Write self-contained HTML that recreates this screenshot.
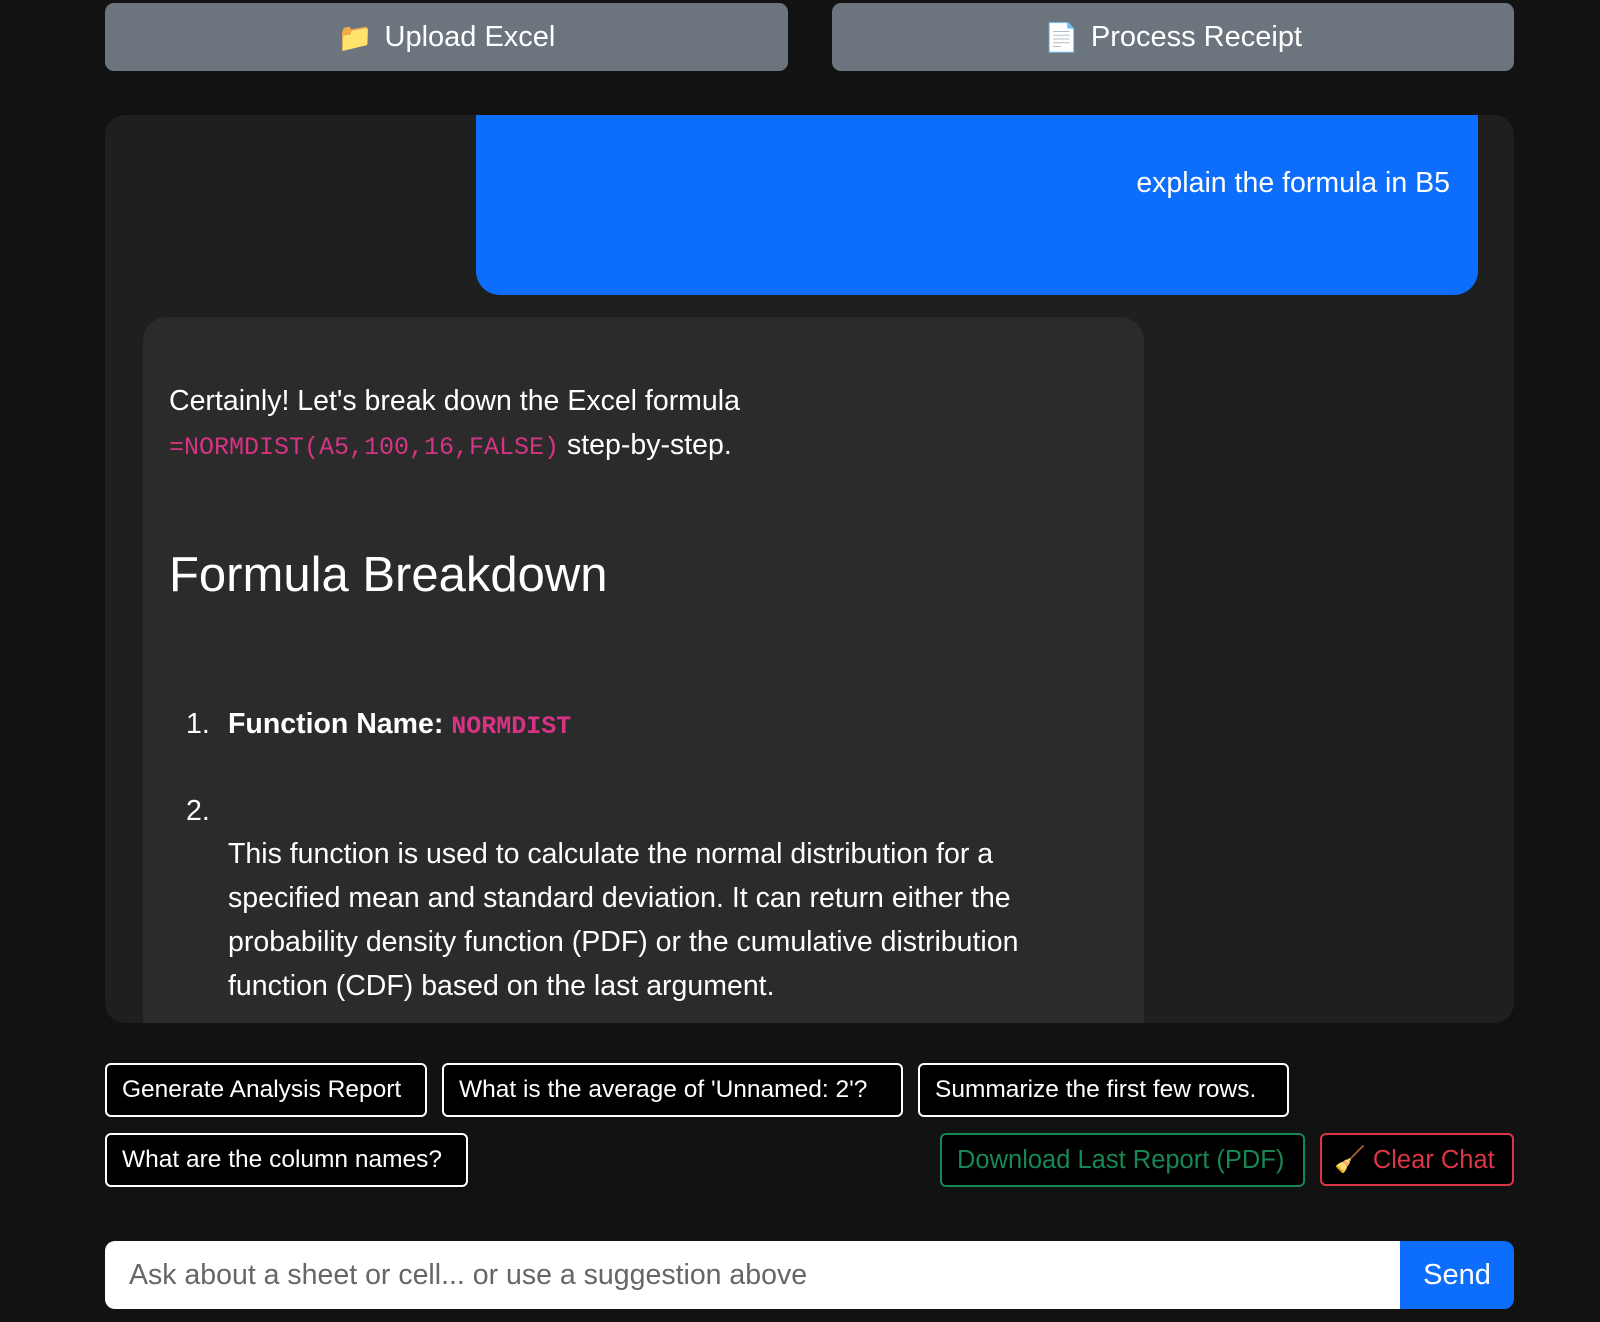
<!DOCTYPE html>
<html><head><meta charset="utf-8"><style>
*{box-sizing:border-box;margin:0;padding:0}
body{width:1600px;height:1322px;background:#121212;font-family:"Liberation Sans",sans-serif;color:#fff;position:relative;overflow:hidden}
.tb{position:absolute;top:3px;height:68px;background:#6c757d;border-radius:9px;display:flex;align-items:center;justify-content:center;font-size:29px;color:#fff;gap:12px}
.chat{position:absolute;left:105px;top:115px;width:1409px;height:908px;background:#1f1f1f;border-radius:20px;overflow:hidden}
.user{position:absolute;left:371px;top:0;width:1002px;height:180px;background:#0d6efd;border-radius:0 0 24px 24px;font-size:28.5px;text-align:right;padding:52px 28px 0 0}
.bot{position:absolute;left:38px;top:202px;width:1001px;height:800px;background:#2b2b2b;border-radius:24px;font-size:28.5px;line-height:44px;padding:62px 26px}
code{font-family:"Liberation Mono",monospace;color:#d63384;font-size:25px}
h2{font-size:49px;font-weight:normal;margin:75px 0 0;line-height:60px}
.b{position:absolute;height:54px;border:2px solid #fff;border-radius:6px;font-size:24.5px;display:flex;align-items:center;padding:0 15px;background:#000;white-space:nowrap}
.in{position:absolute;left:105px;top:1241px;width:1295px;height:68px;background:#fff;border-radius:10px 0 0 10px;color:#666;font-size:28.5px;display:flex;align-items:center;padding-left:24px}
.send{position:absolute;left:1400px;top:1241px;width:114px;height:68px;background:#0d6efd;border-radius:0 10px 10px 0;font-size:29px;display:flex;align-items:center;justify-content:center}
</style></head><body>
<div class="tb" style="left:105px;width:683px"><span style="font-size:28px">📁</span>Upload Excel</div>
<div class="tb" style="left:832px;width:682px"><span style="font-size:28px">📄</span>Process Receipt</div>
<div class="chat">
<div class="user">explain the formula in B5</div>
<div class="bot">
<div>Certainly! Let's break down the Excel formula<br><code>=NORMDIST(A5,100,16,FALSE)</code> step-by-step.</div>
<h2>Formula Breakdown</h2>
<div style="position:absolute;left:43px;top:385px">1.</div>
<div style="position:absolute;left:85px;top:385px"><b>Function Name:</b> <code style="font-weight:bold">NORMDIST</code></div>
<div style="position:absolute;left:43px;top:472px">2.</div>
<div style="position:absolute;left:85px;top:515px;width:840px">This function is used to calculate the normal distribution for a specified mean and standard deviation. It can return either the probability density function (PDF) or the cumulative distribution function (CDF) based on the last argument.</div>
</div>
</div>
<div class="b" style="left:105px;top:1063px;width:322px">Generate Analysis Report</div>
<div class="b" style="left:442px;top:1063px;width:461px">What is the average of 'Unnamed: 2'?</div>
<div class="b" style="left:918px;top:1063px;width:371px">Summarize the first few rows.</div>
<div class="b" style="left:105px;top:1133px;width:363px">What are the column names?</div>
<div class="b" style="left:940px;top:1133px;width:365px;border-color:#198754;color:#198754;font-size:25.5px">Download Last Report (PDF)</div>
<div class="b" style="left:1320px;top:1133px;width:194px;border-color:#dc3545;color:#dc3545;font-size:25.5px;height:53px;padding:0 12px">🧹&nbsp;Clear Chat</div>
<div class="in">Ask about a sheet or cell... or use a suggestion above</div>
<div class="send">Send</div>
</body></html>
